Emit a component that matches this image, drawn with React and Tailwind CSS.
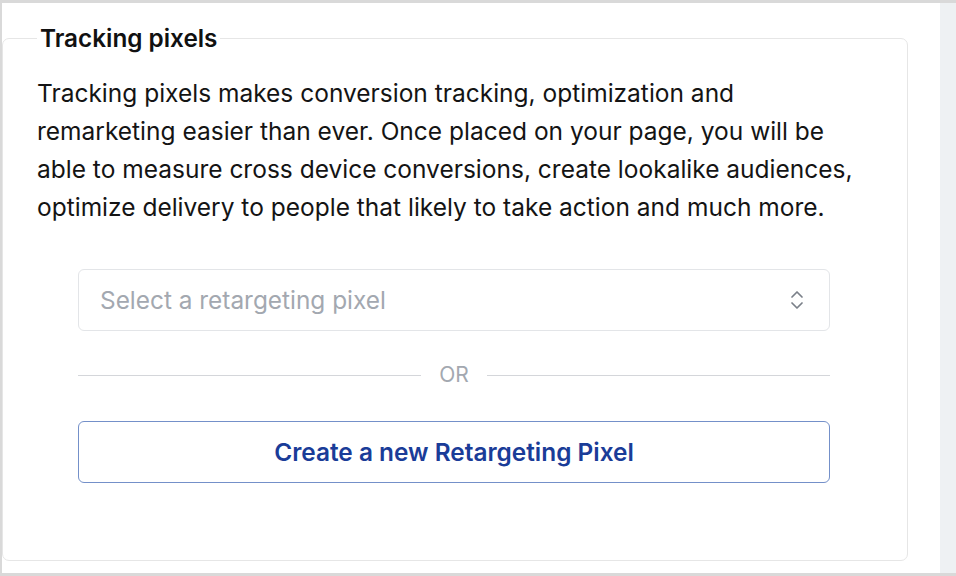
import React from "react";
import { ChevronsUpDown } from "lucide-react";

export default function App() {
  return (
    <div
      className="w-[956px] h-[576px] flex bg-white border-t-[3px] border-b-[3px] border-l-2 border-[#d9d9d9] overflow-hidden"
      style={{ fontFamily: "Inter, 'Noto Sans', sans-serif" }}
    >
      <div className="flex-1 bg-white pr-[32px] pb-[12px]">
        <fieldset className="h-[537px] mt-[21px] border border-[#e6e6e6] rounded-[7px] px-[34px] pt-[22px] pb-0">
          <legend className="px-[3px] text-[24.3px] leading-[28px] font-semibold text-[#111111]">
            Tracking pixels
          </legend>
          <p className="text-[24.5px] leading-[38px] text-[#141414]">
            Tracking pixels makes conversion tracking, optimization and
            remarketing easier than ever. Once placed on your page, you will be
            able to measure cross device conversions, create lookalike audiences,
            optimize delivery to people that likely to take action and much more.
          </p>
          <div className="ml-[41px] mr-[43px] mt-[43px]">
            <button
              type="button"
              className="w-full h-[62px] flex items-center justify-between border border-[#e3e5e8] rounded-[6px] pl-[21px] pr-[20px] bg-white"
            >
              <span className="text-[24.4px] text-[#a3a8b0]">Select a retargeting pixel</span>
              <ChevronsUpDown className="w-6 h-6 text-[#7b8089]" strokeWidth={1.75} />
            </button>
            <div className="mt-[32px] h-[24px] flex items-center gap-[18px]">
              <div className="flex-1 h-px bg-[#d4d6da]" />
              <span className="text-[21px] text-[#a3a8b0] leading-[24px]">OR</span>
              <div className="flex-1 h-px bg-[#d4d6da]" />
            </div>
            <button
              type="button"
              className="mt-[34px] w-full h-[62px] flex items-center justify-center border border-[#7490c9] rounded-[6px] bg-white text-[24.4px] font-semibold text-[#1a3c98]"
            >
              Create a new Retargeting Pixel
            </button>
          </div>
        </fieldset>
      </div>
      <div className="w-[16px] bg-[#eef1f3]" />
    </div>
  );
}
